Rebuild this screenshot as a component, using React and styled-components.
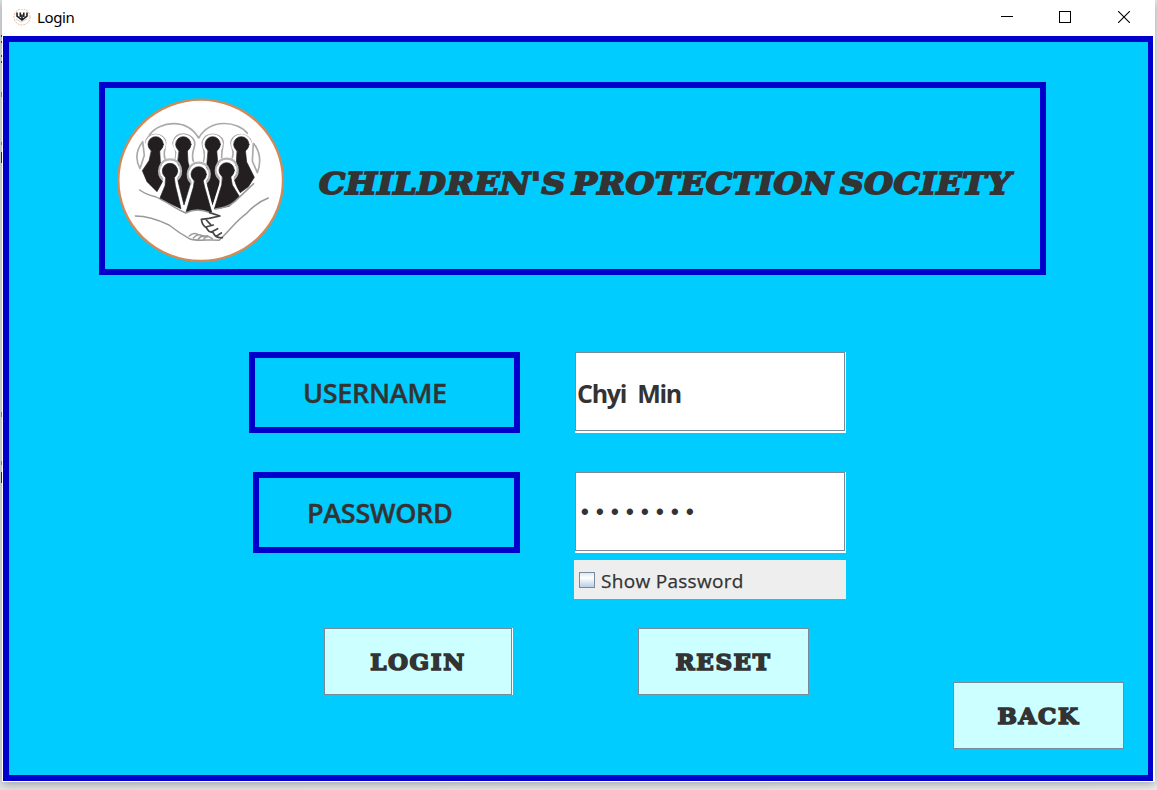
import React from "react";
import styled, { createGlobalStyle } from "styled-components";

const Global = createGlobalStyle`
  * { box-sizing: border-box; }
  html, body { margin: 0; height: 100%; overflow: hidden; background: #dedede; }
  button, input { font: inherit; color: inherit; margin: 0; }
`;

const mark = (color) => `linear-gradient(${color}, ${color})`;

const Desktop = styled.div`
  width: 1157px;
  height: 790px;
  padding-left: 2px;
  overflow: hidden;
  background:
    ${mark("#8a2350")} 1px 35px / 2px 2px no-repeat,
    ${mark("#8a2350")} 1px 41px / 2px 2px no-repeat,
    ${mark("#8a2350")} 1px 55px / 2px 2px no-repeat,
    ${mark("#8a2350")} 1px 61px / 2px 2px no-repeat,
    ${mark("#7d8fc4")} 1px 92px / 2px 5px no-repeat,
    ${mark("#7d8fc4")} 1px 142px / 2px 3px no-repeat,
    ${mark("#7c0a45")} 1px 152px / 2px 11px no-repeat,
    ${mark("#7d8fc4")} 1px 412px / 2px 5px no-repeat,
    ${mark("#7d8fc4")} 1px 461px / 2px 4px no-repeat,
    ${mark("#7c0a45")} 1px 472px / 2px 11px no-repeat,
    linear-gradient(90deg, #e4e4e4, #ececec);
`;
const Window = styled.div`
  width: 1153px;
  height: 782px;
  padding: 0 2px 1px 1px;
  background: #fff;
  box-shadow: 0 2px 9px rgba(0, 0, 0, 0.32);
`;
const TitleBar = styled.header`
  height: 36px;
  display: flex;
  align-items: center;
  padding-left: 10px;
  font: 15px "Noto Sans", "Open Sans", sans-serif;
  color: #000;
`;
const TitleText = styled.span`
  flex: 1;
  margin: 0 0 2px 6px;
  letter-spacing: -0.4px;
`;
const Controls = styled.div`
  display: flex;
  align-items: center;
  gap: 46px;
  margin: 0 23px 2px 0;
  svg { display: block; }
  svg:last-child { margin-left: 1px; }
`;
const Content = styled.main`
  height: 745px;
  border: 6px solid #0000cd;
  border-right-width: 5px;
  background: #00ccff;
  padding: 40px 24px 0 90px;
  display: flex;
  flex-direction: column;
  color: #333;
`;
const Banner = styled.section`
  width: 947px;
  height: 193px;
  flex: none;
  border: 6px solid #0000cd;
  display: flex;
  align-items: flex-start;
  padding-top: 2px;
`;
const BannerTitle = styled.h1`
  margin: 74px 0 0 24px;
  font: italic 700 29px/40px "DejaVu Serif", serif;
  letter-spacing: 0.5px;
  word-spacing: -5px;
  -webkit-text-stroke: 1.8px #333;
  white-space: nowrap;
  transform: scaleX(1.137);
  transform-origin: 0 50%;
`;
const Form = styled.form`
  width: 597px;
  margin: 77px 0 0 150px;
  display: flex;
  flex-direction: column;
`;
const Row = styled.div`
  display: flex;
  justify-content: space-between;
  padding-left: ${(p) => p.$indent || 0}px;
  margin-bottom: ${(p) => p.$after || 0}px;
`;
const Label = styled.label`
  width: ${(p) => p.$width}px;
  height: 81px;
  border: 6px solid #0000cd;
  padding: 0 0 1px 48px;
  display: flex;
  align-items: center;
  font: 600 27px "Open Sans", sans-serif;
  letter-spacing: -0.3px;
  -webkit-text-stroke: 0.4px #333;
`;
const Field = styled.div`
  width: 271px;
  height: 81px;
  background: #fff;
  padding: 0 1px 2px 0;
`;
const FieldInput = styled.input`
  display: block;
  width: 270px;
  height: 79px;
  border: 1px solid #7a8a99;
  outline: 0;
  border-radius: 0;
  background: #fff;
  padding: 3px 0 0 1px;
  font: 700 25px "Open Sans", sans-serif;
  letter-spacing: -1.3px;
  word-spacing: 6px;
`;
const Dots = styled.div`
  width: 270px;
  height: 79px;
  border: 1px solid #7a8a99;
  padding: 0 0 0 5px;
  font: 700 22px/78px "Liberation Sans", sans-serif;
  letter-spacing: 7.3px;
`;
const CheckRow = styled.label`
  align-self: flex-end;
  width: 272px;
  height: 39px;
  background: #eee;
  display: flex;
  align-items: center;
  gap: 6px;
  padding: 2px 0 0 5px;
  font: 19px "Open Sans", sans-serif;
  letter-spacing: 0.3px;
  -webkit-text-stroke: 0.25px #333;
`;
const CheckBox = styled.input`
  appearance: none;
  width: 16px;
  height: 16px;
  && { margin-bottom: 2px; }
  border: 1px solid #7a8a99;
  background: linear-gradient(#dde8f3, #fff 35%, #b8cfe5);
`;
const Actions = styled.div`
  display: flex;
  gap: 126px;
  margin: 29px 0 0 75px;
`;
const Button = styled.button`
  width: ${(p) => p.$width || 171}px;
  height: 67px;
  flex: none;
  padding: 0 0 ${(p) => p.$lift || 0}px;
  border: 1px solid #7a8a99;
  border-radius: 0;
  background: #ccffff;
  box-shadow: ${(p) => (p.$edge ? "1px 0 0 #fff" : "none")};
  font: 700 23px "DejaVu Serif", serif;
  letter-spacing: 1.6px;
  -webkit-text-stroke: 1.6px #333;
`;
const Footer = styled.footer`
  display: flex;
  justify-content: flex-end;
  margin-top: -13px;
`;

const backPawns = [
  "M140 180 L164 180 L166 214 L178 265 L156 305 L126 275 L112 242 L132 212 Z",
  "M223 180 L247 180 L249 216 L262 262 L237 345 L218 270 L218 216 Z",
  "M310 180 L335 180 L338 216 L349 265 L322 345 L302 265 L306 216 Z",
  "M397 180 L421 180 L425 216 L448 262 L430 290 L403 310 L386 265 L394 214 Z",
];
const backHeads = [152, 235, 323, 409];
const frontPawns = [
  "M183 258 L207 258 L211 286 L228 356 L164 326 L180 287 Z",
  "M269 270 L294 270 L299 292 L320 366 L242 370 L265 292 Z",
  "M353 258 L377 258 L382 285 L404 321 L372 349 L328 357 L350 285 Z",
];
const frontHeads = [[195, 243], [281, 253], [365, 241]];

function Figures({ heads, bodies }) {
  const shapes = (
    <>
      {bodies.map((d) => <path key={d} d={d} />)}
      {heads.map(([x, y]) => <circle key={x} cx={x} cy={y} r="23" />)}
    </>
  );
  return (
    <>
      <g stroke="#fff" strokeWidth="15" fill="#fff">{shapes}</g>
      <g fill="#231f20" stroke="#231f20" strokeWidth="2">{shapes}</g>
    </>
  );
}

function Emblem({ width, height }) {
  return (
    <svg width={width} height={height} viewBox="0 0 570 531" fill="none" strokeLinejoin="round" strokeLinecap="round">
      <ellipse cx="287" cy="271" rx="247" ry="242" fill="#fff" stroke="#d08a58" strokeWidth="7" />
      <g stroke="#aaa" strokeWidth="5">
        <path d="M133 135 C163 93 245 83 281 144 C316 84 398 93 427 130" />
        <path d="M113 155 C92 182 92 211 105 236 L118 196 Z M445 160 C466 183 469 218 457 248 L442 213 Z" />
        <path d="M122 158 C126 127 170 126 181 151 C186 168 172 181 180 207 M205 157 C211 124 257 126 268 153 C275 173 255 184 265 214 M292 157 C299 125 345 126 354 153 C357 166 349 174 350 203 M378 155 C388 126 432 128 438 156 M204 157 C205 172 219 179 211 206 M292 157 C291 173 304 181 296 214 M378 155 C376 170 390 179 382 203" />
      </g>
      <Figures heads={backHeads.map((x) => [x, 163])} bodies={backPawns} />
      <g stroke="#b5b5b5" strokeWidth="7">
        {frontHeads.map(([x, y]) => (
          <path key={x} d={`M${x - 20} ${y + 28} C${x - 43} ${y + 8} ${x - 32} ${y - 35} ${x} ${y - 35} C${x + 34} ${y - 35} ${x + 43} ${y + 8} ${x + 20} ${y + 28}`} />
        ))}
      </g>
      <Figures heads={frontHeads} bodies={frontPawns} />
      <path d="M242 370 Q282 350 318 370 L345 378 L318 384 L289 388 L300 400 L353 444 L322 449 L210 420 Z" fill="#fff" />
      <g stroke="#999" strokeWidth="4.5">
        <path d="M104 300 Q126 315 151 320 C184 334 207 354 242 369 Q275 352 315 368" />
        <path d="M91 378 C129 378 165 392 192 405 Q221 428 253 446 C283 456 314 446 342 451 C378 418 393 392 425 370 Q455 337 490 324" />
        <path d="M331 357 Q368 353 389 335 L446 281" />
        <path d="M253 438 Q264 426 278 433 M265 444 Q280 427 296 440 M280 447 Q291 432 307 441 M295 449 L306 437 L322 446" />
      </g>
      <path d="M314 368 L345 378 L312 385 L289 388 Q292 407 304 413 Q311 428 324 427 Q331 445 352 443 M304 390 L317 404 M302 411 L325 405 M319 426 L338 416 M333 439 L349 429" stroke="#444" strokeWidth="5" />
    </svg>
  );
}

function TinyEmblem() {
  return (
    <svg width="18" height="18" viewBox="0 0 18 18" fill="none">
      <circle cx="9" cy="8" r="8" fill="#fff" stroke="#d9a581" strokeWidth=".8" strokeDasharray="2 1" />
      <path d="M4 3.5 V7 L9 11 L14 7 V3.5 M7.3 3.5 V8 M9 5.5 V10 M10.8 3.5 V8" stroke="#222" strokeWidth="1.6" />
      <path d="M3 10 L8 13 L14 10" stroke="#bbb" strokeWidth=".7" />
    </svg>
  );
}

export default function App() {
  return (
    <Desktop>
      <Global />
      <Window>
        <TitleBar>
          <TinyEmblem />
          <TitleText>Login</TitleText>
          <Controls>
            <svg width="12" height="12"><path d="M0 5.5H12" stroke="#000" /></svg>
            <svg width="12" height="12"><rect x=".5" y=".5" width="11" height="11" fill="none" stroke="#000" /></svg>
            <svg width="12" height="12"><path d="M0 0L12 12M12 0L0 12" stroke="#000" strokeWidth="1.1" /></svg>
          </Controls>
        </TitleBar>
        <Content>
          <Banner>
            <Emblem width={190} height={177} />
            <BannerTitle>CHILDREN'S PROTECTION SOCIETY</BannerTitle>
          </Banner>
          <Form>
            <Row $after={39}>
              <Label $width={271}>USERNAME</Label>
              <Field><FieldInput defaultValue="Chyi Min" /></Field>
            </Row>
            <Row $indent={4} $after={7}>
              <Label $width={267}>PASSWORD</Label>
              <Field><Dots>••••••••</Dots></Field>
            </Row>
            <CheckRow><CheckBox type="checkbox" />Show Password</CheckRow>
            <Actions>
              <Button type="button" $width={188} $edge>LOGIN</Button>
              <Button type="button">RESET</Button>
            </Actions>
          </Form>
          <Footer><Button type="button" $lift={1}>BACK</Button></Footer>
        </Content>
      </Window>
    </Desktop>
  );
}
